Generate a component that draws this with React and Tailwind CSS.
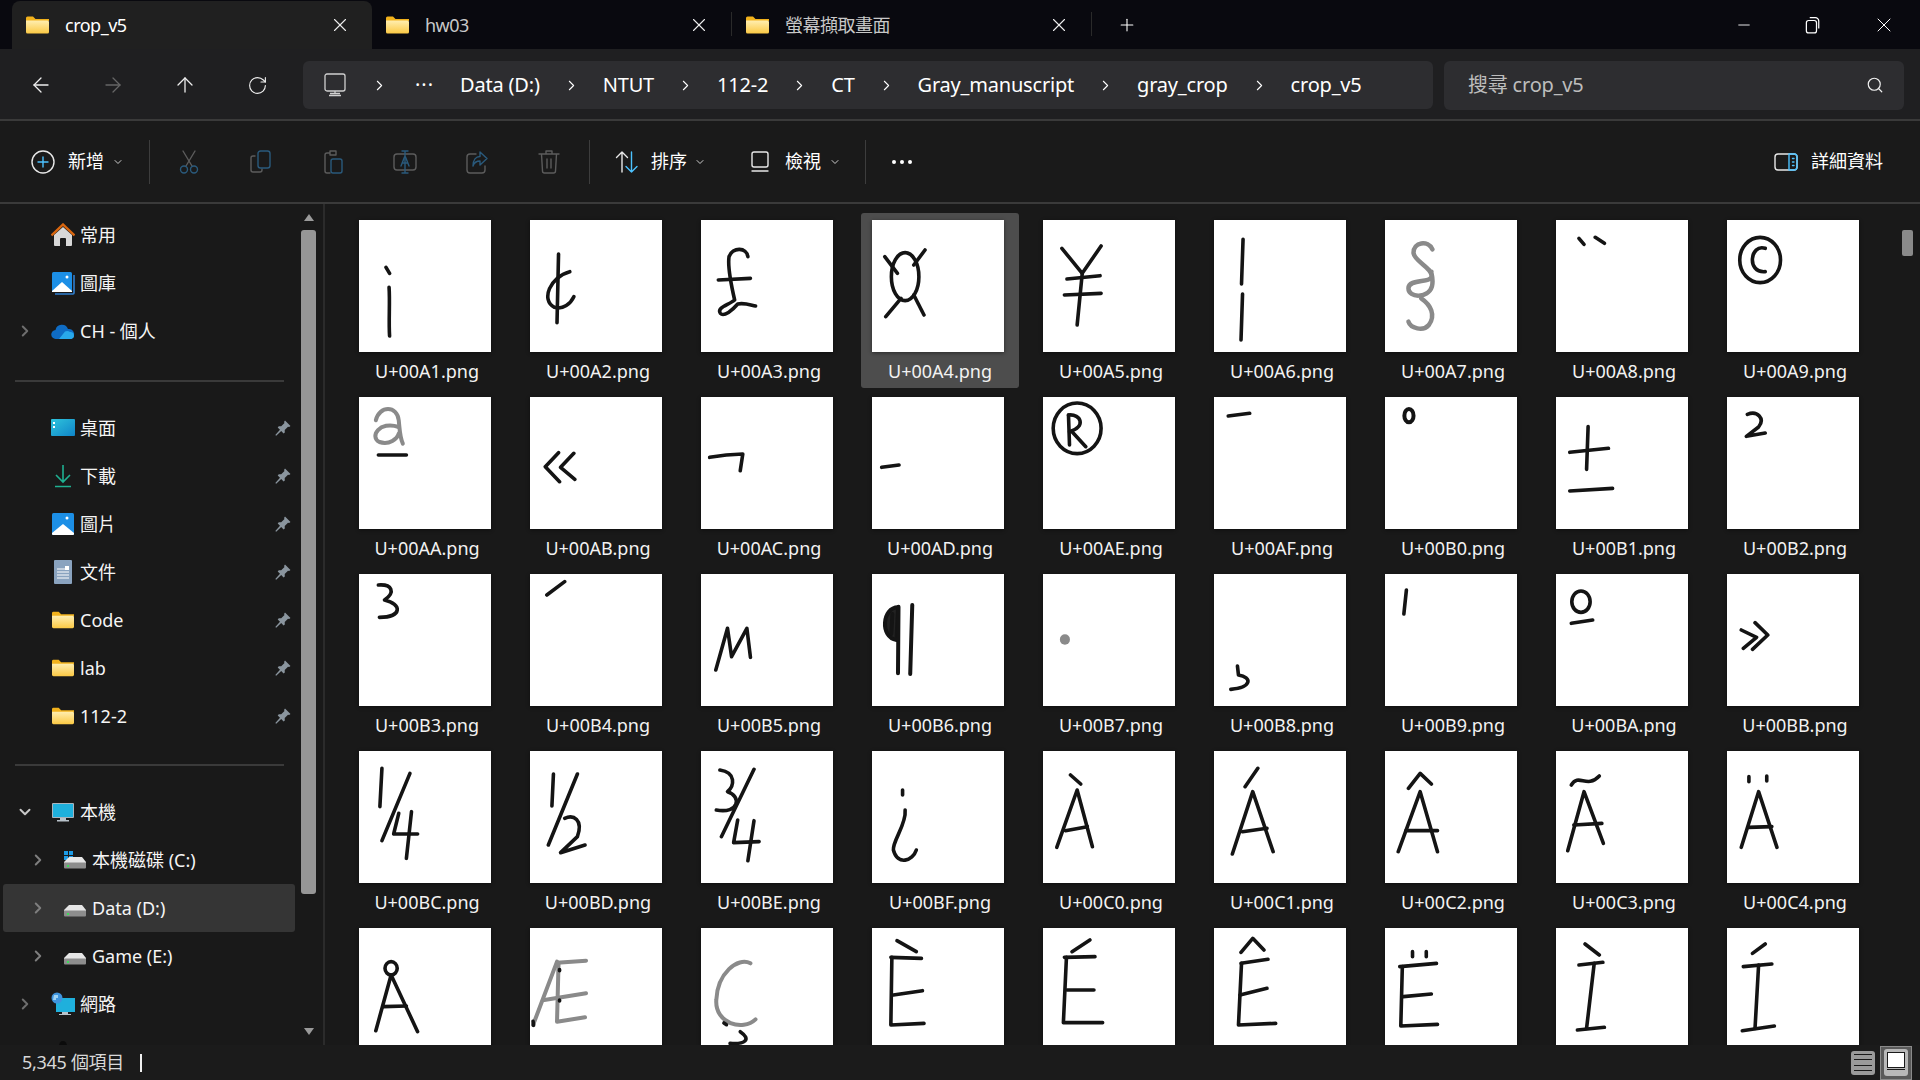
import { ArrowLeft, ArrowRight, ArrowUp, ChevronDown, ChevronRight, Minus, Plus, RotateCw, Search, X } from "lucide-react";

const FONT = "font-['Noto_Sans','Noto_Sans_CJK_TC',sans-serif]";

// handwritten scans, traced in a 259x396 box that is squeezed onto the 132px tile
const GLYPHS = {
  A1: ["M53 142L60 160", "M59 202C61 250 58 300 60 348"],
  A2: ["M56 102L53 308", "M78 155C40 170 20 240 48 262C65 270 80 250 86 230"],
  A3: ["M92 110C90 82 62 80 55 110C52 140 60 200 66 240C55 255 30 262 38 280C45 292 62 270 72 252C85 248 95 254 107 258", "M34 180L97 175"],
  A4: ["M38 170a27 72 0 1 0 54 0a27 72 0 1 0-54 0", "M25 110L50 160", "M104 90L82 135", "M27 290L57 235", "M102 285L82 225"],
  A5: ["M37 85L77 160L114 78", "M77 160L67 315", "M47 177L112 167", "M42 225L114 220"],
  A6: ["M57 58L54 192", "M56 222L53 360"],
  A7: { gray: true, w: 4.5, d: ["M93 88C85 60 55 65 56 100C58 125 95 145 91 170C90 190 46 175 46 205C46 235 85 235 92 200C96 175 90 160 91 155", "M71 235C90 255 100 285 86 315C75 335 50 325 46 305"] },
  A8: ["M45 55L55 73", "M77 52L95 70"],
  A9: ["M25 120a40 68 0 1 0 80 0a40 68 0 1 0-80 0", "M75 85C45 70 38 160 75 155"],
  AA: { gray: true, w: 4, d: ["M33 70C40 25 75 25 78 70C80 100 80 120 86 140", "M78 90C40 70 20 120 40 135C60 145 75 125 78 110"], ink: ["M38 174L93 174"] },
  AB: ["M56 167L30 209L58 254", "M86 169L60 211L88 247"],
  AC: ["M17 181C40 175 60 172 82 171L77 221"],
  AD: ["M19 211L53 204"],
  AE: ["M20 94a47 76 0 1 0 94 0a47 76 0 1 0-94 0", "M50 54L52 144", "M50 54C75 50 85 90 52 104", "M57 104L84 149"],
  AF: ["M28 57L70 49"],
  B0: { w: 4, d: ["M38 56a9 20 0 1 0 18 0a9 20 0 1 0-18 0"] },
  B1: ["M63 89L60 217", "M27 166L103 154", "M27 282L111 274"],
  B2: ["M40 52C60 40 75 65 62 90L38 118L75 108"],
  B3: ["M38 33C65 30 72 55 50 78C85 90 85 130 40 130"],
  B4: ["M68 23L33 63"],
  B5: ["M29 288L52 163L60 248L90 163L97 250"],
  B6: { w: 4, d: ["M51 100C20 100 15 190 48 198Z", "M40 120L38 180", "M52 98L51 298", "M79 93L75 300"] },
  B7: { gray: true, w: 10, d: ["M43 196L43 197"] },
  B8: ["M46 276L48 303C75 310 75 340 33 346"],
  B9: ["M42 48L37 120"],
  BA: ["M31 83a18 32 0 1 0 36 0a18 32 0 1 0-36 0", "M30 148L72 138"],
  BB: ["M28 168L58 190L32 223", "M55 146L80 183L50 226"],
  BC: ["M45 52L41 167", "M100 67L45 269", "M78 187L68 249L115 249", "M103 182L93 322"],
  BD: ["M46 69L43 165", "M93 69L36 282", "M68 202C85 190 105 205 93 257L60 305L108 282"],
  BE: ["M37 57C70 65 65 105 52 122C80 135 75 190 30 177", "M104 55L40 257", "M72 207L64 275L114 272", "M104 209L92 329"],
  BF: ["M60 117L60 132", "M65 177C68 220 40 270 42 297C50 345 80 330 87 297"],
  C0: ["M54 72L74 99", "M27 289L67 117L97 287", "M44 239L87 227"],
  C1: ["M86 52L61 107", "M36 309L76 122L116 302", "M56 242L104 232"],
  C2: ["M46 112L69 67L91 99", "M26 302L69 122L103 302", "M41 239L103 239"],
  C3: ["M30 102C45 65 60 115 85 75", "M23 299L55 122L93 277", "M35 222L90 217"],
  C4: ["M43 77L43 92", "M78 75L78 90", "M28 289L62 122L98 289", "M42 229L88 227"],
  C5: ["M51 121a12 20 0 1 0 24 0a12 20 0 1 0-24 0", "M33 308L63 141L115 311", "M48 236L93 234"],
  C6: { gray: true, w: 4, d: ["M6 291L53 101", "M53 104L110 98", "M28 216L110 196", "M56 106L53 281L108 268"], ink: ["M58 125L58 128", "M58 216L58 219", "M6 280L7 292"] },
  C7: { gray: true, w: 4, d: ["M97 106C72 86 32 136 30 216C27 286 82 311 107 274"], ink: ["M77 311C100 335 85 350 57 346", "M45 285L50 290"] },
  C8: ["M49 38L87 71", "M37 88L97 91", "M39 88L37 291L102 286", "M42 201L99 188"],
  C9: ["M92 36L57 71", "M42 88L102 86", "M46 88L40 284L117 284", "M47 186L100 186"],
  CA: ["M53 73L76 31L98 66", "M53 106L106 94", "M54 106L48 291L121 286", "M51 201L104 181"],
  CB: ["M54 71L54 86", "M81 71L81 86", "M29 116L101 106", "M34 116L31 294L103 289", "M36 206L91 198"],
  CC: ["M57 48L85 81", "M45 111L92 103", "M75 106L60 301", "M42 306L95 298"],
  CD: ["M75 48L50 76", "M32 116L88 108", "M62 111L55 301", "M30 308L93 294"],
};

const CODES = [
  "A1", "A2", "A3", "A4", "A5", "A6", "A7", "A8", "A9",
  "AA", "AB", "AC", "AD", "AE", "AF", "B0", "B1", "B2",
  "B3", "B4", "B5", "B6", "B7", "B8", "B9", "BA", "BB",
  "BC", "BD", "BE", "BF", "C0", "C1", "C2", "C3", "C4",
  "C5", "C6", "C7", "C8", "C9", "CA", "CB", "CC", "CD",
];

const CRUMBS = ["Data (D:)", "NTUT", "112-2", "CT", "Gray_manuscript", "gray_crop", "crop_v5"];

function Ink({ code }) {
  const raw = GLYPHS[code];
  const glyph = Array.isArray(raw) ? { d: raw } : raw;
  return (
    <svg viewBox="0 0 259 396" preserveAspectRatio="none" className="h-full w-full blur-[0.4px]" fill="none" strokeLinecap="round" strokeLinejoin="round">
      {glyph.d.map((d) => (
        <path key={d} d={d} stroke={glyph.gray ? "#8a8a8a" : "#141414"} strokeWidth={glyph.w || 3.6} vectorEffect="non-scaling-stroke" fill={code === "B6" && d.endsWith("Z") ? "#222" : "none"} />
      ))}
      {(glyph.ink || []).map((d) => (
        <path key={d} d={d} stroke="#141414" strokeWidth="3.6" vectorEffect="non-scaling-stroke" />
      ))}
    </svg>
  );
}

function Tile({ code, selected, label }) {
  return (
    <div className={`h-[175px] w-[158px] shrink-0 rounded-[3px] pl-[11px] pt-[7px] ${selected ? "bg-[#4d4d4d]" : ""}`}>
      <div className="h-[132px] w-[132px] bg-white shadow-[0_1px_4px_rgba(0,0,0,0.45)]">
        <Ink code={code} />
      </div>
      {label ? <p className="-ml-[11px] mt-[5px] text-center text-[18px] leading-[28px] text-[#f2f2f2]">U+00{code}.png</p> : null}
    </div>
  );
}

function Folder({ className = "h-[18px] w-[23px]" }) {
  return (
    <svg viewBox="0 0 23 18" className={className}>
      <defs>
        <linearGradient id="folderBody" x1="0" y1="0" x2="0" y2="1">
          <stop offset="0" stopColor="#ffeeb0" />
          <stop offset="1" stopColor="#fbc944" />
        </linearGradient>
      </defs>
      <path d="M0 2a1.5 1.5 0 0 1 1.5-1.5h5.5l2.5 2.5H23V5H0Z" fill="#f2b21c" />
      <path d="M0 4.5h21.5A1.5 1.5 0 0 1 23 6v10a1.5 1.5 0 0 1-1.5 1.5h-20A1.5 1.5 0 0 1 0 16Z" fill="url(#folderBody)" />
    </svg>
  );
}

function Home() {
  return (
    <svg viewBox="0 0 24 24" className="h-6 w-6">
      <path d="M3 12 12 4l9 8v10a1 1 0 0 1-1 1H4a1 1 0 0 1-1-1Z" fill="#d8d8d8" />
      <path d="M9 23v-7a1 1 0 0 1 1-1h4a1 1 0 0 1 1 1v7Z" fill="#191919" />
      <path d="M0.5 12.5 12 1.5l11.5 11" fill="none" stroke="#d9660f" strokeWidth="2.4" />
    </svg>
  );
}

function Photo({ stacked }) {
  return (
    <svg viewBox="0 0 24 24" className="h-6 w-6">
      {stacked ? <path d="M23 4v18a1 1 0 0 1-1 1H4" fill="none" stroke="#2f7fd0" strokeWidth="1.6" /> : null}
      <rect x="1" y="1" width={stacked ? 20 : 22} height={stacked ? 20 : 22} rx="1.5" fill="#1c8fe6" />
      <path d={stacked ? "M1 20 11 11l10 9v1H1Z" : "M1 21 12 12l11 9v1a1 1 0 0 1-1 1H2a1 1 0 0 1-1-1Z"} fill="#fff" />
      <circle cx="16" cy="6" r="1.5" fill="#fff" />
    </svg>
  );
}

function Cloud() {
  return (
    <svg viewBox="0 0 24 16" className="h-4 w-6">
      <path d="M5 16a4.5 4.5 0 0 1-.5-9A6.5 6.5 0 0 1 17 6a5 5 0 0 1 2 10Z" fill="#0f6cc4" />
      <path d="M8 16 14 8.5a5 5 0 0 1 5 .5 3.6 3.6 0 0 1 1.5 7Z" fill="#28a8ea" />
    </svg>
  );
}

function Desktop() {
  return (
    <svg viewBox="0 0 24 18" className="h-[18px] w-6">
      <defs>
        <linearGradient id="screenFill" x1="0" y1="0" x2="1" y2="1">
          <stop offset="0" stopColor="#2fc4dc" />
          <stop offset="1" stopColor="#0f84c8" />
        </linearGradient>
      </defs>
      <rect width="24" height="17" rx="1" fill="url(#screenFill)" />
      <rect x="2" y="3" width="2" height="2" fill="#fff" />
      <rect x="2" y="7" width="2" height="2" fill="#fff" />
    </svg>
  );
}

function Download() {
  return (
    <svg viewBox="0 0 24 24" className="h-6 w-6" fill="none" stroke="#1fb091" strokeWidth="1.6">
      <path d="M12 1v17M5 11l7 7 7-7M4 22.5h16" />
    </svg>
  );
}

function Doc() {
  return (
    <svg viewBox="0 0 18 24" className="h-6 w-[18px]">
      <rect width="18" height="24" rx="1" fill="#8aa3bf" />
      <path d="M3 9h8M3 12h12M3 15h12M3 18h12" stroke="#fff" strokeWidth="1.2" />
      <rect x="11" y="6" width="4" height="4" fill="#fff" />
    </svg>
  );
}

function Pc() {
  return (
    <svg viewBox="0 0 22 19" className="h-[19px] w-[22px]">
      <rect width="22" height="15" rx="1" fill="#a9b4bd" />
      <rect x="1" y="1" width="20" height="13" fill="#1fb0dc" />
      <path d="M8 15h6v2h3v1.5H5V17h3Z" fill="#b8c2ca" />
    </svg>
  );
}

function Drive({ win }) {
  return (
    <svg viewBox="0 0 22 18" className="h-[18px] w-[22px]">
      {win ? <path d="M0 0h4v4H0ZM5 0h4v4H5ZM0 5h4v4H0ZM5 5h4v4H5Z" fill="#1c9be6" /> : null}
      <path d="M5 6h13l4 5v1H0v-1Z" fill="#e6e6e6" />
      <path d="M0 11.5h22v5a1 1 0 0 1-1 1H1a1 1 0 0 1-1-1Z" fill="#8d8d8d" />
      <rect x="3" y="14" width="2" height="2" fill="#3ddc5a" />
    </svg>
  );
}

function Network() {
  return (
    <svg viewBox="0 0 24 24" className="h-6 w-6">
      <rect x="5" y="6" width="19" height="14" fill="#1fb0dc" />
      <path d="M11 20h6v2h3v1H8v-1h3Z" fill="#b8c2ca" />
      <circle cx="6" cy="6" r="5.5" fill="#3f94dd" />
      <path d="M3 3h4v3H5v2H2Z" fill="#9fd3f5" />
    </svg>
  );
}

function Penguin() {
  return (
    <svg viewBox="0 0 24 24" className="h-6 w-6">
      <ellipse cx="12" cy="6" rx="4" ry="5" fill="#0b0b0b" />
      <ellipse cx="12" cy="16" rx="6" ry="7" fill="#222" />
    </svg>
  );
}

function Pin() {
  return (
    <svg viewBox="0 0 16 16" className="h-4 w-4" fill="#8a959e">
      <path d="M10 0.5 15.5 6l-1.4 1-1.1-.3-3.3 3.3.1 2.4-1.2 1.1L6.2 11 1.2 15.8 0.3 15 5 9.8 2.7 7.4l1.1-1.2 2.4.1 3.3-3.3L9 1.9Z" />
    </svg>
  );
}

function Row({ icon, label, level = 0, chevron, pinned, selected }) {
  return (
    <div className={`ml-[3px] flex h-[48px] w-[292px] shrink-0 items-center rounded-[3px] text-[18px] text-[#f5f5f5] ${selected ? "bg-[#353535]" : ""}`}>
      <div className={`flex w-[26px] justify-center text-[#8c8c8c] ${level ? "ml-[22px]" : "ml-[9px]"}`}>
        {chevron === "down" ? <ChevronDown size={18} strokeWidth={2.6} className="text-[#c8c8c8]" /> : null}
        {chevron === "right" ? <ChevronRight size={18} strokeWidth={2.6} className={level ? "text-[#7e7e7e]" : "text-[#6e6e6e]"} /> : null}
      </div>
      <div className={`flex justify-center ${level ? "ml-[13px] w-[22px]" : "ml-[13px] w-6"}`}>{icon}</div>
      {label ? <span className={level ? "ml-[6px]" : "ml-[5px]"}>{label}</span> : null}
      {pinned ? (
        <span className="ml-auto mr-[4px]">
          <Pin />
        </span>
      ) : null}
    </div>
  );
}

function Tab({ label, active, width }) {
  return (
    <div className={`flex h-[48px] shrink-0 items-center ${width} ${active ? "rounded-t-[8px] bg-[#202020]" : "rounded-t-[8px]"}`}>
      <div className="ml-[14px]">
        <Folder />
      </div>
      <span className={`ml-[16px] text-[18px] tracking-[-0.5px] ${active ? "text-white" : "text-[#c8c8c8]"}`}>{label}</span>
      <X size={22} strokeWidth={1.2} className="ml-auto mr-[21px] text-[#eeeeee]" />
    </div>
  );
}

function ToolIcon({ children }) {
  return (
    <svg viewBox="0 0 24 24" className="h-6 w-6 shrink-0" fill="none" strokeWidth="1.4" strokeLinecap="round" strokeLinejoin="round">
      {children}
    </svg>
  );
}

const DIM = "#5c5c5c";
const DIMBLUE = "#2a5a7c";

function Toolbar() {
  return (
    <div className="flex h-[83px] shrink-0 items-center border-b-2 border-[#3a3a3a] bg-[#1a1a1a] text-[18px] text-white">
      <div className="ml-[31px] flex w-[118px] items-center">
        <ToolIcon>
          <circle cx="12" cy="12" r="11" stroke="#e8e8e8" />
          <path d="M12 7v10M7 12h10" stroke="#4cc2ff" />
        </ToolIcon>
        <span className="ml-[13px]">新增</span>
        <ChevronDown size={12} className="ml-[8px] text-[#cccccc]" />
      </div>
      <div className="h-[44px] w-[1px] bg-[#3d3d3d]" />
      <div className="ml-[27px] flex w-[384px] items-center gap-[48px]">
        <ToolIcon>
          <path d="M6 1l9 15M18 1l-9 15" stroke={DIM} />
          <circle cx="7" cy="19.5" r="3.5" stroke={DIMBLUE} />
          <circle cx="17" cy="19.5" r="3.5" stroke={DIMBLUE} />
        </ToolIcon>
        <ToolIcon>
          <path d="M6 6H4a2 2 0 0 0-2 2v12a2 2 0 0 0 2 2h7a2 2 0 0 0 2-2v-1" stroke={DIM} />
          <rect x="9" y="1" width="12" height="17" rx="2.5" stroke={DIMBLUE} />
        </ToolIcon>
        <ToolIcon>
          <path d="M9 3H6a2 2 0 0 0-2 2v16a2 2 0 0 0 2 2h3M9 1h6v4H9Z" stroke={DIM} />
          <rect x="10" y="9" width="11" height="14" rx="2" stroke={DIMBLUE} />
        </ToolIcon>
        <ToolIcon>
          <rect x="1" y="4" width="22" height="16" rx="3" stroke={DIM} />
          <path d="M12 1v22M9 1h6M9 23h6" stroke={DIMBLUE} />
          <path d="M8 16l3.5-9h1L16 16M9.5 13h5" stroke={DIMBLUE} />
        </ToolIcon>
        <ToolIcon>
          <path d="M11 4H5a3 3 0 0 0-3 3v13a3 3 0 0 0 3 3h12a3 3 0 0 0 3-3v-4" stroke={DIM} />
          <path d="M15 2l7 6.5-7 6.5v-4c-4 0-6 2-7 5 0-6 3-9.500 7-9.500Z" stroke={DIMBLUE} />
        </ToolIcon>
        <ToolIcon>
          <path d="M2 4h20M9 4V1h6v3M4.500 4l1 17a2 2 0 0 0 2 2h9a2 2 0 0 0 2-2l1-17M10 9v9M14 9v9" stroke={DIM} />
        </ToolIcon>
      </div>
      <div className="ml-[28px] h-[44px] w-[1px] bg-[#3d3d3d]" />
      <div className="ml-[25px] flex w-[127px] items-center">
        <ToolIcon>
          <path d="M7 22V2M1.500 7.500 7 2l5.500 5.500" stroke="#e8e8e8" />
          <path d="M16.500 2v20M11 16.500l5.500 5.500 5.500-5.500" stroke="#4cc2ff" />
        </ToolIcon>
        <span className="ml-[12px]">排序</span>
        <ChevronDown size={12} className="ml-[7px] text-[#cccccc]" />
      </div>
      <div className="ml-[6px] flex w-[117px] items-center">
        <ToolIcon>
          <rect x="4" y="2" width="16" height="15" rx="2" stroke="#e8e8e8" />
          <path d="M4 21h16" stroke="#e8e8e8" />
        </ToolIcon>
        <span className="ml-[13px]">檢視</span>
        <ChevronDown size={12} className="ml-[8px] text-[#cccccc]" />
      </div>
      <div className="h-[44px] w-[1px] bg-[#3d3d3d]" />
      <div className="ml-[26px] flex items-center gap-[4px]">
        <span className="h-[4px] w-[4px] rounded-full bg-white" />
        <span className="h-[4px] w-[4px] rounded-full bg-white" />
        <span className="h-[4px] w-[4px] rounded-full bg-white" />
      </div>
      <div className="ml-auto mr-[37px] flex items-center">
        <ToolIcon>
          <rect x="1" y="4" width="22" height="16" rx="3" stroke="#e8e8e8" />
          <path d="M15 4h5a3 3 0 0 1 3 3v10a3 3 0 0 1-3 3h-5Z" stroke="#4cc2ff" />
          <path d="M18.500 8.500h1.500M18.500 12h1.500M18.500 15.500h1.500" stroke="#4cc2ff" />
        </ToolIcon>
        <span className="ml-[13px]">詳細資料</span>
      </div>
    </div>
  );
}

function Sidebar() {
  return (
    <div className="flex w-[325px] shrink-0 overflow-hidden border-r-2 border-[#2b2b2b]">
      <div className="flex w-[298px] shrink-0 flex-col overflow-hidden pt-[7px]">
        <Row icon={<Home />} label="常用" />
        <Row icon={<Photo stacked />} label="圖庫" />
        <Row icon={<Cloud />} label="CH - 個人" chevron="right" />
        <div className="mb-[22px] ml-[15px] mt-[25px] h-[2px] w-[269px] shrink-0 bg-[#3a3a3a]" />
        <Row icon={<Desktop />} label="桌面" pinned />
        <Row icon={<Download />} label="下載" pinned />
        <Row icon={<Photo />} label="圖片" pinned />
        <Row icon={<Doc />} label="文件" pinned />
        <Row icon={<Folder className="h-[18px] w-[22px]" />} label="Code" pinned />
        <Row icon={<Folder className="h-[18px] w-[22px]" />} label="lab" pinned />
        <Row icon={<Folder className="h-[18px] w-[22px]" />} label="112-2" pinned />
        <div className="mb-[22px] ml-[15px] mt-[24px] h-[2px] w-[269px] shrink-0 bg-[#3a3a3a]" />
        <Row icon={<Pc />} label="本機" chevron="down" />
        <Row icon={<Drive win />} label="本機磁碟 (C:)" level={1} chevron="right" />
        <Row icon={<Drive />} label="Data (D:)" level={1} chevron="right" selected />
        <Row icon={<Drive />} label="Game (E:)" level={1} chevron="right" />
        <Row icon={<Network />} label="網路" chevron="right" />
        <Row icon={<Penguin />} />
      </div>
      <div className="flex w-[25px] shrink-0 flex-col items-start pl-[3px] pt-[10px]">
        <div className="ml-[3px] h-0 w-0 border-x-[5px] border-b-[7px] border-x-transparent border-b-[#9a9a9a]" />
        <div className="mt-[9px] h-[664px] w-[15px] rounded-[3px] bg-[#969696]" />
        <div className="ml-[3px] mt-[134px] h-0 w-0 border-x-[5px] border-t-[7px] border-x-transparent border-t-[#9a9a9a]" />
      </div>
    </div>
  );
}

export default function App() {
  return (
    <div className={`flex h-[1080px] w-[1920px] flex-col overflow-hidden bg-[#191919] ${FONT}`}>
      {/* tabs + window buttons */}
      <div className="flex h-[49px] shrink-0 items-end bg-[#09090f] pl-[12px]">
        <Tab label="crop_v5" active width="w-[360px]" />
        <Tab label="hw03" width="w-[359px]" />
        <div className="mb-[13px] h-[24px] w-[1px] bg-[#2a2a2a]" />
        <Tab label="螢幕擷取畫面" width="w-[359px]" />
        <div className="mb-[13px] h-[24px] w-[1px] bg-[#2a2a2a]" />
        <div className="flex h-[48px] w-[70px] items-center justify-center">
          <Plus size={20} strokeWidth={1.3} className="text-white" />
        </div>
        <div className="ml-auto flex h-[48px] items-center pr-[24px] text-white">
          <Minus size={18} strokeWidth={1.2} />
          <svg viewBox="0 0 16 16" className="ml-[50px] h-[18px] w-[18px]" fill="none" stroke="currentColor" strokeWidth="1.1">
            <rect x="3" y="4" width="9" height="11" rx="2" />
            <path d="M6 1.500h5a3 3 0 0 1 3 3V11" />
          </svg>
          <X size={24} strokeWidth={1} className="ml-[51px]" />
        </div>
      </div>

      {/* navigation row */}
      <div className="flex h-[72px] shrink-0 items-center border-b-2 border-[#3a3a3a] bg-[#1f1f21] pt-[2px]">
        <ArrowLeft size={24} strokeWidth={1.3} className="ml-[29px] text-[#eeeeee]" />
        <ArrowRight size={24} strokeWidth={1.3} className="ml-[48px] text-[#666666]" />
        <ArrowUp size={24} strokeWidth={1.3} className="ml-[48px] text-[#eeeeee]" />
        <RotateCw size={21} strokeWidth={1.3} className="ml-[50px] text-[#eeeeee]" />
        <div className="ml-[35px] flex h-[48px] w-[1130px] items-center rounded-[6px] bg-[#2d2d30] pl-[20px] text-[20px] tracking-[-0.2px] text-white">
          <svg viewBox="0 0 24 24" className="h-6 w-6 shrink-0" fill="none" stroke="#d0d0d0" strokeWidth="1.3">
            <rect x="2" y="1" width="20" height="17" rx="2" />
            <path d="M12 18v3M6 22.500h12M7 20.500h10" />
          </svg>
          <ChevronRight size={17} strokeWidth={1.5} className="ml-[24px]" />
          <span className="ml-[27px] tracking-[1px]">···</span>
          {CRUMBS.map((crumb, i) => (
            <div key={crumb} className="flex items-center">
              {i > 0 ? <ChevronRight size={17} strokeWidth={1.5} className="mx-[23px]" /> : null}
              <span className={i === 0 ? "ml-[26px]" : ""}>{crumb}</span>
            </div>
          ))}
        </div>
        <div className="ml-[11px] flex h-[49px] w-[460px] items-center rounded-[6px] bg-[#2d2d30] pl-[24px] pr-[20px] text-[20px] tracking-[-0.2px] text-[#bdbdbd]">
          <span>搜尋 crop_v5</span>
          <Search size={18} strokeWidth={1.6} className="ml-auto text-[#f0f0f0]" />
        </div>
      </div>

      <Toolbar />

      <div className="flex min-h-0 flex-1">
        <Sidebar />
        <div className="min-w-0 flex-1 overflow-hidden pl-[23px] pt-[9px]">
          <div className="grid grid-cols-[repeat(9,158px)] gap-x-[13px] gap-y-[2px]">
            {CODES.map((code, i) => (
              <Tile key={code} code={code} selected={code === "A4"} label={i < 36} />
            ))}
          </div>
        </div>
        <div className="w-[19px] shrink-0 pl-[1px] pt-[26px]">
          <div className="h-[26px] w-[11px] rounded-[2px] bg-[#8a8a8a]" />
        </div>
      </div>

      {/* status bar */}
      <div className="flex h-[35px] shrink-0 items-center bg-[#1b1b1b] pl-[22px] text-[18px] text-[#d8d8d8]">
        <span className="tracking-[-0.3px]">5,345 個項目</span>
        <div className="ml-[16px] h-[18px] w-[2px] bg-[#f0f0f0]" />
        <div className="ml-auto flex items-center">
          <div className="flex h-[24px] w-[24px] flex-col justify-between rounded-[3px] bg-[#9a9a9a] px-[3px] py-[3px]">
            <span className="h-[1px] bg-[#1a1a1a]" />
            <span className="h-[1px] bg-[#1a1a1a]" />
            <span className="h-[1px] bg-[#1a1a1a]" />
            <span className="h-[1px] bg-[#1a1a1a]" />
          </div>
          <div className="ml-[5px] flex h-[34px] w-[32px] items-center justify-center border border-[#8a8a8a] bg-[#5a5a5a]">
            <div className="flex h-[27px] w-[24px] flex-col rounded-[3px] bg-[#b8b8b8] p-[3px]">
              <span className="h-[16px] border border-[#1a1a1a] bg-white" />
              <span className="mt-[1px] h-[1px] bg-[#1a1a1a]" />
            </div>
          </div>
          <div className="w-[8px]" />
        </div>
      </div>
    </div>
  );
}
